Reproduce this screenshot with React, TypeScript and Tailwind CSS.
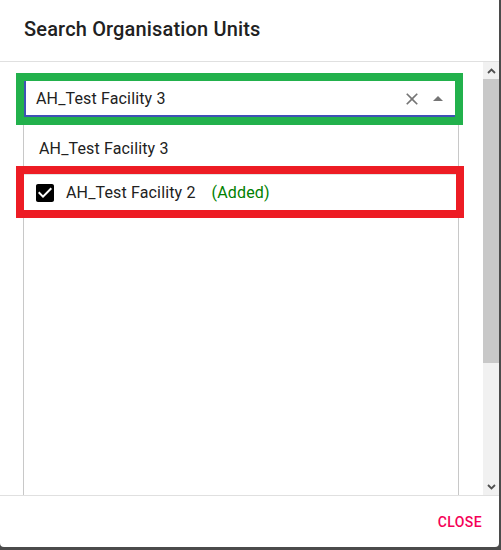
import React from "react";

function Chevron({ up }: { up?: boolean }) {
  return (
    <svg width="9" height="6" viewBox="0 0 9 6" className={up ? "" : "rotate-180"}>
      <path d="M1 5 L4.5 1.5 L8 5" fill="none" stroke="#505050" strokeWidth="1.8" />
    </svg>
  );
}

export default function App() {
  return (
    <div
      className="w-[501px] h-[550px] bg-[#4b4b4b] overflow-hidden"
      style={{ fontFamily: "Roboto, 'Liberation Sans', sans-serif" }}
    >
      <div className="w-[499px] h-[547px] bg-white rounded-b-[4px] flex flex-col overflow-hidden">
        <div className="h-[62px] shrink-0 border-b border-[#e0e0e0] pl-6 pt-[13px]">
          <h2 className="text-[20px] leading-[32px] font-medium text-[#212121] tracking-[0.16px]">
            Search Organisation Units
          </h2>
        </div>

        <div className="h-[433px] shrink-0 flex overflow-hidden">
          <div className="flex-1 overflow-hidden pl-4 pt-[11px]">
            <div className="w-[447px] border-8 border-[#22b14c]">
              <div className="h-[36px] border-l-2 border-b-2 border-[#3f51b5] flex items-center pl-[10px] pr-[5px] pt-[1px]">
                <span className="flex-1 text-[16px] text-[#212121] tracking-[0.15px]">AH_Test Facility 3</span>
                <svg width="20" height="20" viewBox="0 0 24 24" className="mr-[4px]">
                  <path
                    fill="#757575"
                    d="M19 6.41L17.59 5 12 10.59 6.41 5 5 6.41 10.59 12 5 17.59 6.41 19 12 13.41 17.59 19 19 17.59 13.41 12z"
                  />
                </svg>
                <svg width="24" height="24" viewBox="0 0 24 24">
                  <path fill="#757575" d="M7 14l5-5 5 5z" />
                </svg>
              </div>
            </div>

            <div className="ml-[7px] w-[436px] h-[500px] border-x border-[#c8c8c8] pt-[5px]">
              <div className="h-[36px] pl-[15px] pt-[2px] flex items-center text-[16px] text-[#212121] tracking-[0.15px]">
                AH_Test Facility 3
              </div>
              <div className="ml-[-8px] w-[448px] border-8 border-[#ed1c24] bg-white">
                <div className="h-[36px] border-t border-[#e3e3e3] flex items-center pl-3">
                  <svg width="18" height="18" viewBox="3 3 18 18">
                    <path
                      fill="#000"
                      d="M19 3H5c-1.11 0-2 .9-2 2v14c0 1.1.89 2 2 2h14c1.11 0 2-.9 2-2V5c0-1.1-.89-2-2-2zm-9 14l-5-5 1.41-1.41L10 14.17l7.59-7.59L19 8l-9 9z"
                    />
                  </svg>
                  <span className="ml-3 text-[16px] text-[#212121] tracking-[0.15px]">AH_Test Facility 2</span>
                  <span className="ml-4 text-[16px] text-[#008000] tracking-[0.15px]">(Added)</span>
                </div>
              </div>
            </div>
          </div>

          <div className="w-[16px] shrink-0 flex flex-col">
            <div className="h-[17px] bg-[#f1f1f1] flex items-center justify-center">
              <Chevron up />
            </div>
            <div className="h-[284px] bg-[#c8c8c8]" />
            <div className="flex-1 bg-[#f1f1f1]" />
            <div className="h-[17px] bg-[#f1f1f1] flex items-center justify-center">
              <Chevron />
            </div>
          </div>
        </div>

        <div className="h-[52px] shrink-0 border-t border-[#e0e0e0] flex items-center justify-end pr-[9px]">
          <button className="px-2 py-[6px] text-[14px] leading-[24px] font-medium uppercase tracking-[0.4px] text-[#f50057]">
            Close
          </button>
        </div>
      </div>
    </div>
  );
}
